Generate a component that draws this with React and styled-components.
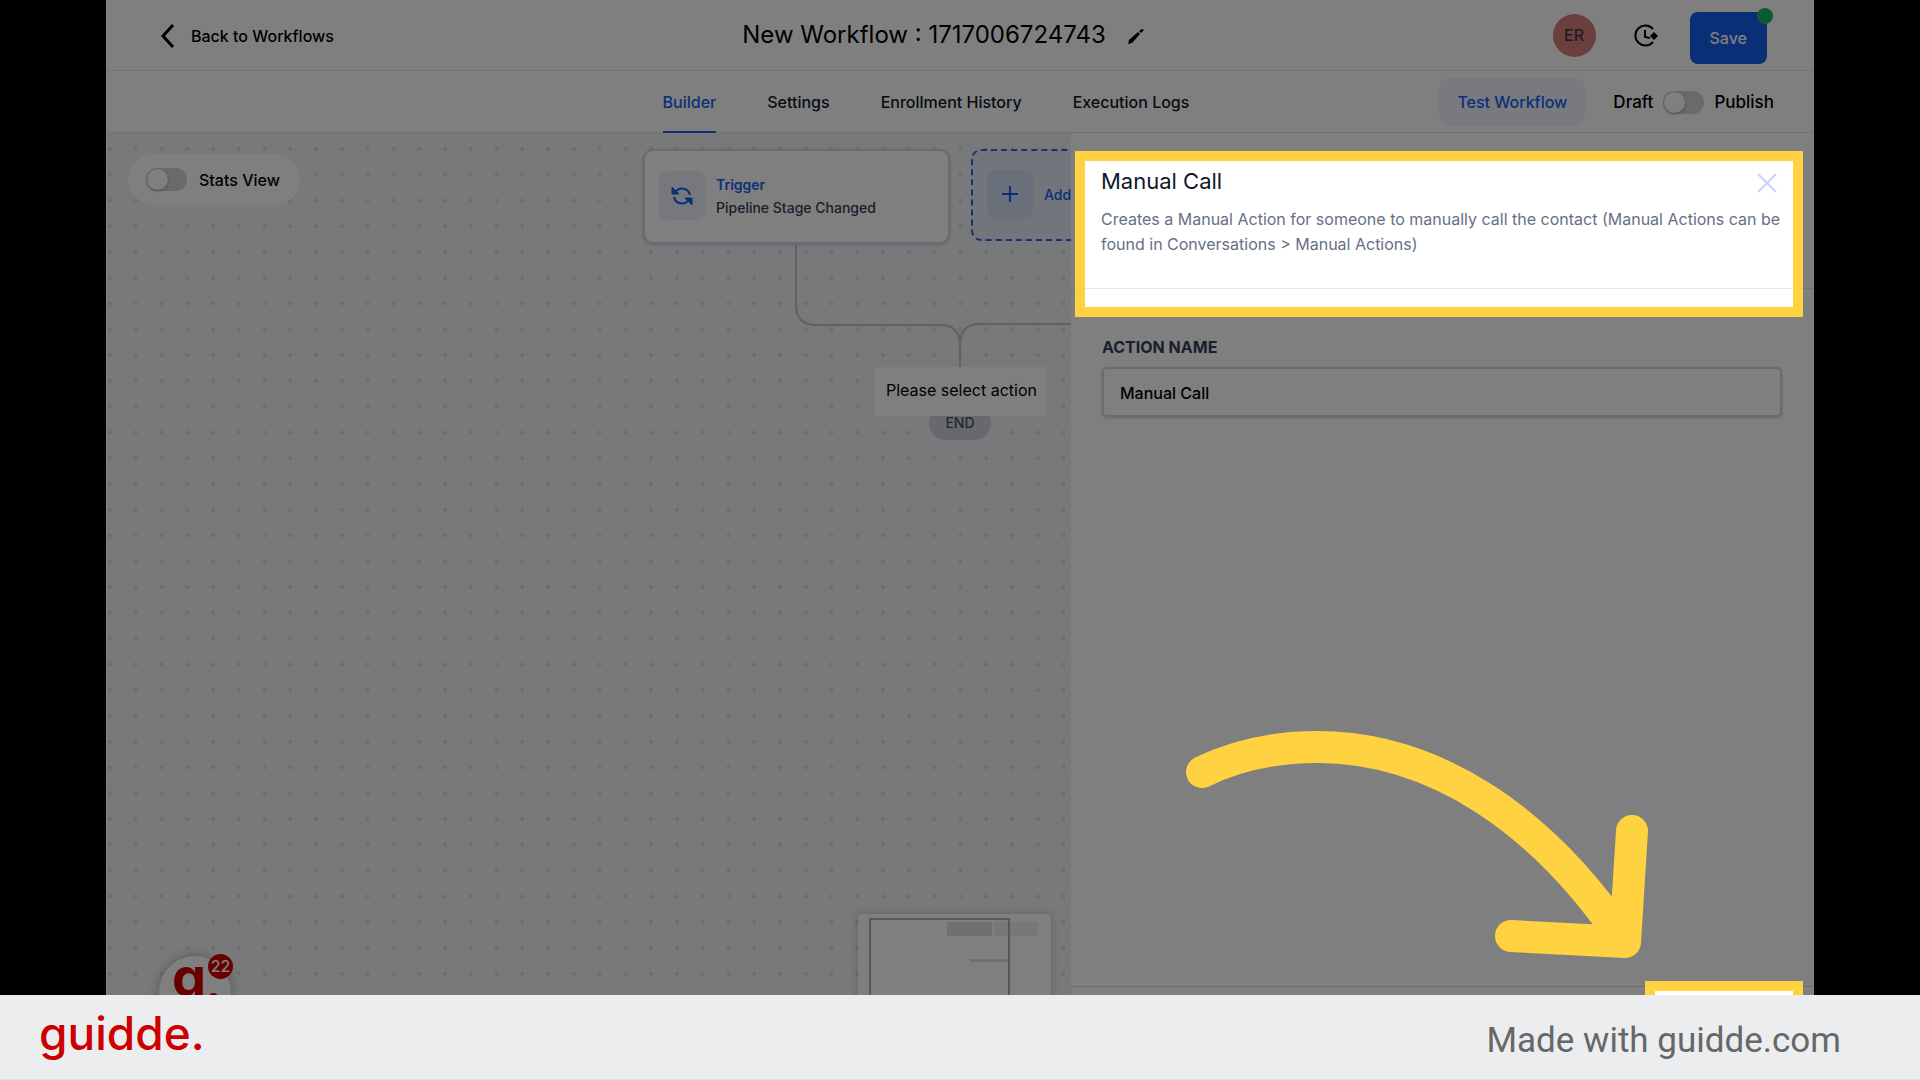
import React from "react";
import styled, { createGlobalStyle } from "styled-components";

function App() {
  return (
    <Page>
      <GlobalStyle />
      <Stage>
        <Frame>
          <TopBar>
            <Back href="#workflows">
              <svg width="14" height="26" viewBox="0 0 14 26">
                <path d="M12 2L2 13l10 11" />
              </svg>
              Back to Workflows
            </Back>
            <Title>
              <h1>New Workflow : 1717006724743</h1>
              <IconButton aria-label="Rename">
                <svg width="16" height="16" viewBox="0 0 16 16">
                  <path d="M0 16l1-4 9-8 2 2-8 9zM11 3l3-2 2 1-3 3z" />
                </svg>
              </IconButton>
            </Title>
            <TopActions>
              <Avatar>ER</Avatar>
              <IconButton aria-label="Versions">
                <HistoryIcon />
              </IconButton>
              <SaveButton>
                Save
                <SaveDot />
              </SaveButton>
            </TopActions>
          </TopBar>

          <TabBar>
            <Tabs>
              <Tab href="#builder" $active>
                Builder
              </Tab>
              <Tab href="#settings">Settings</Tab>
              <Tab href="#enrollment">Enrollment History</Tab>
              <Tab href="#logs">Execution Logs</Tab>
            </Tabs>
            <PublishActions>
              <TestButton>Test Workflow</TestButton>
              <PublishLabel>
                Draft
                <Switch type="checkbox" />
                Publish
              </PublishLabel>
            </PublishActions>
          </TabBar>

          <Workspace>
            <Canvas>
              <Edges>
                <defs>
                  <pattern
                    id="dots"
                    x="-10"
                    y="3"
                    width="25.77"
                    height="25.77"
                    patternUnits="userSpaceOnUse"
                  >
                    <circle cx="13" cy="13" r="2" fill="#d9dada" />
                  </pattern>
                </defs>
                <rect width="100%" height="100%" fill="url(#dots)" />
                <path d="M689 112V172Q689 192 709 192H833Q853 192 853 212V234M853 212Q853 191 873 191H964" />
              </Edges>
              <StatsPill>
                <Switch type="checkbox" />
                Stats View
              </StatsPill>
              <TriggerNode>
                <NodeIcon>
                  <RefreshIcon />
                </NodeIcon>
                <div>
                  <strong>Trigger</strong>
                  <p>Pipeline Stage Changed</p>
                </div>
              </TriggerNode>
              <AddNode>
                <NodeIcon $blue>
                  <svg width="16" height="16" viewBox="0 0 16 16">
                    <path d="M8 0v16M0 8h16" />
                  </svg>
                </NodeIcon>
                Add
              </AddNode>
              <EndNode>END</EndNode>
              <SelectAction>Please select action</SelectAction>
              <Support>
                g
                <Badge>22</Badge>
              </Support>
              <MiniMap>
                <svg width="193" height="90" viewBox="0 0 193 90">
                  <path d="M89 8h45v14H89zM112 45h39v3h-39z" fill="#e0e0e0" />
                  <path d="M136 8h44v14h-44z" fill="#eeeeee" />
                  <path
                    d="M12 90V5h139v85"
                    fill="none"
                    stroke="#adb0c0"
                    strokeWidth="2"
                  />
                </svg>
              </MiniMap>
            </Canvas>

            <Panel>
              <PanelHeader>
                <PanelTop>
                  <h2>Manual Call</h2>
                  <CloseButton aria-label="Close">
                    <svg width="20" height="20" viewBox="0 0 20 20">
                      <path d="M1 1l18 18M19 1L1 19" />
                    </svg>
                  </CloseButton>
                </PanelTop>
                <p>
                  Creates a Manual Action for someone to manually call the
                  contact (Manual Actions can be found in Conversations &gt;
                  Manual Actions)
                </p>
                <Spotlight />
              </PanelHeader>
              <Field>
                <label htmlFor="action-name">ACTION NAME</label>
                <input id="action-name" defaultValue="Manual Call" />
              </Field>
              <PanelFooter>
                <SaveSpotlight />
              </PanelFooter>
              <Arrow viewBox="0 0 470 240">
                <path d="M20 45C55 28 95 20 135 20C255 20 362 95 443 215M329 209L443 215L450 104" />
              </Arrow>
            </Panel>
          </Workspace>
        </Frame>
      </Stage>
      <Footer>
        <Logo>guidde.</Logo>
        <span>Made with guidde.com</span>
      </Footer>
    </Page>
  );
}

const HistoryIcon = () => (
  <svg width="24" height="24" viewBox="0 0 24 24">
    <path
      d="M19 5A10 10 0 1 0 19 18M11 6v7l5 1"
      fill="none"
      stroke="#000"
      strokeWidth="2"
    />
    <path d="M20 8l4 4-4 4-4-4z" />
  </svg>
);

const RefreshIcon = () => (
  <svg width="22" height="22" viewBox="0 0 22 22">
    <path d="M4 8A8 8 0 0 1 19 10M18 14A8 8 0 0 1 3 12" />
    <path d="M1 2v7h7zM21 20v-7h-7z" fill="#155eef" strokeWidth="1" />
  </svg>
);

export default App;

const GlobalStyle = createGlobalStyle`
  * {
    box-sizing: border-box;
  }

  body {
    margin: 0;
    font-family: Inter, sans-serif;
    font-size: 16px;
    font-weight: 500;
  }

  h1, h2, p {
    margin: 0;
    font-weight: 400;
  }

  button, input {
    font: inherit;
  }

  a {
    text-decoration: none;
  }
`;

const Page = styled.div`
  display: flex;
  flex-direction: column;
  height: 100vh;
  background: #000;
`;

const Stage = styled.main`
  flex: 1;
  min-height: 0;
  display: flex;
  padding: 0 106px;
`;

const Frame = styled.div`
  flex: 1;
  display: flex;
  flex-direction: column;
  overflow: hidden;
  background: #fff;
  border: 1px solid #808080;
  border-bottom: 0;
`;

const TopBar = styled.header`
  display: grid;
  grid-template-columns: 1fr auto 1fr;
  align-items: center;
  height: 70px;
  padding: 0 46px 0 54px;
  border-bottom: 1px solid #e4e5ea;
`;

const Back = styled.a`
  display: flex;
  align-items: center;
  gap: 16px;
  color: #000;

  svg {
    fill: none;
    stroke: #000;
    stroke-width: 3;
  }
`;

const Title = styled.div`
  display: flex;
  align-items: center;
  gap: 22px;
  padding-right: 42px;

  h1 {
    padding-bottom: 2px;
    font-size: 24px;
    line-height: 32px;
  }
`;

const IconButton = styled.button`
  display: flex;
  padding: 0;
  border: 0;
  background: none;
`;

const TopActions = styled.div`
  display: flex;
  align-items: center;
  justify-content: flex-end;
`;

const Avatar = styled.span`
  width: 43px;
  height: 43px;
  margin-right: 38px;
  border-radius: 50%;
  background: #d47f7b;
  color: #3f3540;
  line-height: 43px;
  text-align: center;
`;

const SaveButton = styled.button`
  position: relative;
  height: 52px;
  margin: 4px 0 0 32px;
  padding: 0 20px;
  border: 0;
  border-radius: 8px;
  background: #155eef;
  color: #fff;
`;

const SaveDot = styled.span`
  position: absolute;
  top: -4px;
  right: -6px;
  width: 16px;
  height: 16px;
  border-radius: 50%;
  background: #12b76a;
`;

const TabBar = styled.nav`
  display: grid;
  grid-template-columns: 1fr auto 1fr;
  height: 62px;
  padding: 0 39px;
  border-bottom: 1px solid #e4e5ea;
`;

const Tabs = styled.div`
  grid-column: 2;
  display: flex;
  gap: 51px;
  padding-right: 68px;
`;

const Tab = styled.a`
  line-height: 62px;
  color: ${(props) => (props.$active ? "#155eef" : "#101828")};
  box-shadow: ${(props) => (props.$active ? "inset 0 -2px #155eef" : "none")};
`;

const PublishActions = styled.div`
  display: flex;
  align-items: center;
  justify-content: flex-end;
  gap: 28px;
`;

const TestButton = styled.button`
  height: 48px;
  padding: 0 18px;
  border: 0;
  border-radius: 10px;
  background: #f3f4ff;
  color: #155eef;
`;

const PublishLabel = styled.label`
  display: flex;
  align-items: center;
  gap: 10px;
  font-size: 17px;
`;

const Switch = styled.input`
  appearance: none;
  width: 41px;
  height: 23px;
  margin: 0;
  border-radius: 12px;
  background: #d4d4d4;

  &::before {
    content: "";
    display: block;
    width: 21px;
    height: 21px;
    margin: 1px;
    border-radius: 50%;
    background: #fff;
    box-shadow: 0 1px 3px rgba(0, 0, 0, 0.3);
  }
`;

const Workspace = styled.div`
  flex: 1;
  min-height: 0;
  display: flex;
`;

const Canvas = styled.section`
  position: relative;
  flex: 1;
  overflow: hidden;
  background: #eff2f6;
`;

const Edges = styled.svg`
  position: absolute;
  width: 100%;
  height: 100%;

  path {
    fill: none;
    stroke: #c0c2c5;
    stroke-width: 2;
  }
`;

const StatsPill = styled.label`
  position: absolute;
  top: 21px;
  left: 21px;
  display: flex;
  align-items: center;
  gap: 12px;
  height: 51px;
  padding: 0 20px 0 18px;
  border-radius: 26px;
  background: #fff;
`;

const Node = styled.div`
  position: absolute;
  top: 16px;
  display: flex;
  align-items: center;
  gap: 11px;
  width: 307px;
  height: 95px;
  padding: 0 14px 2px;
  border-radius: 10px;
  font-size: 14px;
  line-height: 23px;
`;

const TriggerNode = styled(Node)`
  left: 536px;
  background: #fff;
  border: 2px solid #d5d7e0;
  box-shadow: 0 1px 3px rgba(16, 24, 40, 0.2);

  strong {
    color: #155eef;
    font-weight: 600;
  }

  p {
    color: #344054;
    font-weight: 500;
  }
`;

const AddNode = styled(Node)`
  left: 864px;
  height: 92px;
  background: #e4ebf7;
  border: 2px dashed #2f62e0;
  color: #155eef;
`;

const NodeIcon = styled.span`
  display: grid;
  place-items: center;
  width: 46px;
  height: 49px;
  border-radius: 8px;
  background: ${(props) => (props.$blue ? "#d3e0f7" : "#eff1fd")};

  svg {
    fill: none;
    stroke: #155eef;
    stroke-width: 2;
  }
`;

const SelectAction = styled.div`
  position: absolute;
  top: 234px;
  left: 768px;
  padding: 0 10px 2px 11px;
  background: #fff;
  font-weight: 400;
  line-height: 47px;
`;

const EndNode = styled.div`
  position: absolute;
  top: 273px;
  left: 822px;
  width: 62px;
  border-radius: 17px;
  background: #d0d2d8;
  color: #475467;
  font-size: 14px;
  line-height: 34px;
  text-align: center;
`;

const Support = styled.div`
  position: absolute;
  bottom: -33px;
  left: 52px;
  width: 72px;
  height: 72px;
  padding-left: 13px;
  border-radius: 50%;
  background: #fff;
  box-shadow: 0 0 12px rgba(0, 0, 0, 0.3);
  color: #d00000;
  font: 700 54px/42px Inter, sans-serif;

  &::after {
    content: "";
    position: absolute;
    top: 37px;
    left: 50px;
    width: 9px;
    height: 9px;
    border-radius: 50%;
    background: #d00000;
  }
`;

const Badge = styled.span`
  position: absolute;
  top: -2px;
  right: -2px;
  width: 25px;
  height: 25px;
  border-radius: 50%;
  background: #d00000;
  color: #fff;
  font: 500 16px/25px Inter, sans-serif;
  text-align: center;
`;

const MiniMap = styled.div`
  position: absolute;
  right: 20px;
  bottom: -9px;
  background: #fff;
  border-radius: 4px;
  box-shadow: 0 0 8px rgba(0, 0, 0, 0.2);

  svg {
    display: block;
  }
`;

const Panel = styled.aside`
  position: relative;
  display: flex;
  flex-direction: column;
  width: 742px;
  background: #fff;
`;

const PanelHeader = styled.div`
  position: relative;
  height: 156px;
  padding: 31px 26px 0 30px;
  border-bottom: 1px solid #e4e7ec;

  p {
    margin-top: 9px;
    color: #667085;
    font-size: 16px;
    line-height: 25px;
  }
`;

const PanelTop = styled.div`
  display: flex;
  align-items: center;
  justify-content: space-between;
  padding-right: 10px;

  h2 {
    color: #101828;
    font-size: 22px;
    line-height: 34px;
  }
`;

const CloseButton = styled(IconButton)`
  padding-top: 4px;

  svg {
    stroke: #c7d2fe;
    stroke-width: 2;
  }
`;

/* the shadow is what darkens everything around the lit box */
const Spotlight = styled.div`
  position: absolute;
  z-index: 1;
  top: 18px;
  right: 10px;
  bottom: -29px;
  left: 4px;
  border: 10px solid #ffd242;
  box-shadow: 0 0 0 4000px rgba(0, 0, 0, 0.5);
  pointer-events: none;
`;

const Field = styled.div`
  flex: 1;
  display: flex;
  flex-direction: column;
  padding: 46px 31px 0;

  label {
    color: #344054;
    font-size: 16px;
    font-weight: 700;
    line-height: 24px;
  }

  input {
    height: 50px;
    margin-top: 8px;
    padding: 2px 16px 0;
    border: 2px solid #d5d7e0;
    border-radius: 5px;
    color: #000;
    box-shadow: 0 1px 3px rgba(16, 24, 40, 0.2);
  }
`;

const PanelFooter = styled.div`
  position: relative;
  height: 9px;
  border-top: 1px solid #d8d8d8;
`;

const SaveSpotlight = styled.div`
  position: absolute;
  z-index: 2;
  top: -6px;
  right: 10px;
  width: 158px;
  height: 60px;
  border: 10px solid #ffd242;
  background: #fff;
`;

const Arrow = styled.svg`
  position: absolute;
  z-index: 2;
  right: 161px;
  bottom: 28px;
  width: 470px;
  height: 240px;
  fill: none;
  stroke: #ffd242;
  stroke-width: 32;
  stroke-linecap: round;
  stroke-linejoin: round;
`;

const Footer = styled.footer`
  position: relative;
  z-index: 3;
  display: flex;
  align-items: center;
  justify-content: space-between;
  height: 85px;
  padding: 8px 79px 0 39px;
  background: #ecedef;
  border-bottom: 1px solid #dcdee0;
  color: #666769;
  font: 400 35px/42px Roboto, sans-serif;
`;

const Logo = styled.strong`
  padding-bottom: 16px;
  color: #cc0000;
  font: 500 46px/56px Inter, sans-serif;
`;
